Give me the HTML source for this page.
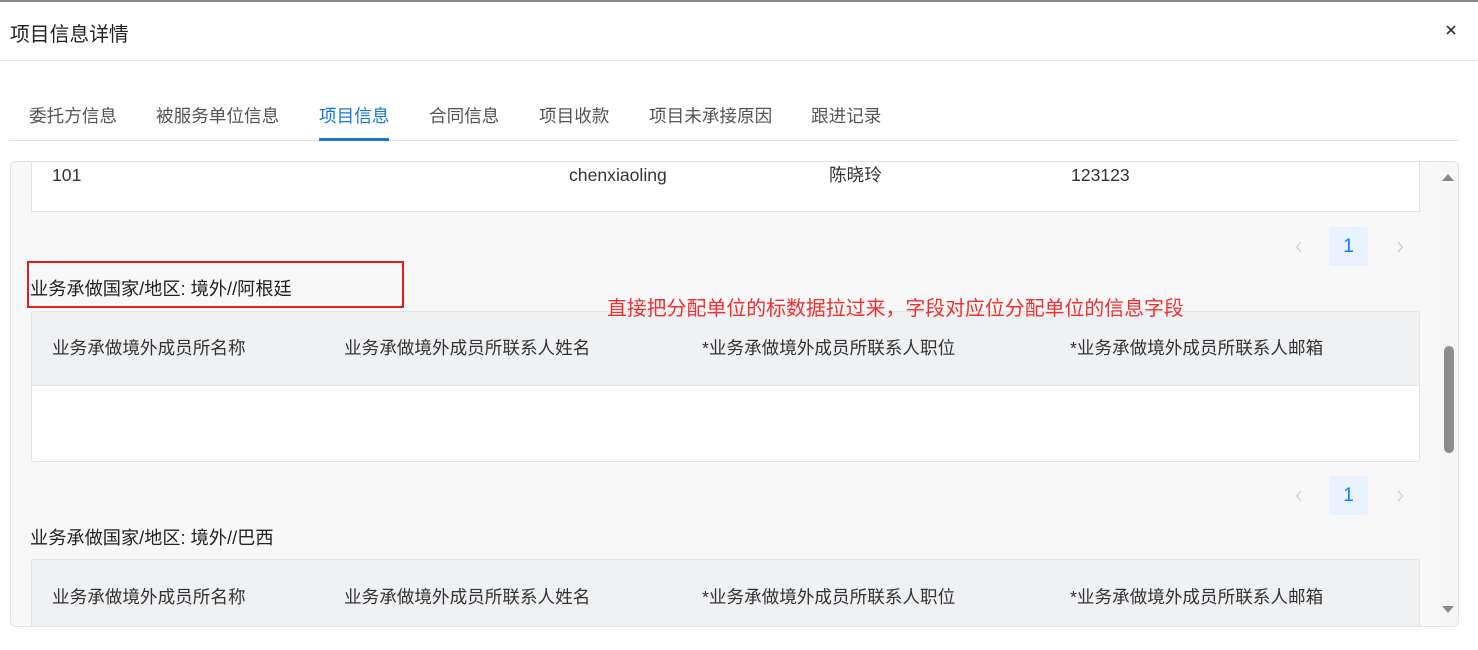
<!DOCTYPE html>
<html><head><meta charset="utf-8"><style>
*{margin:0;padding:0;box-sizing:border-box}
body{width:1478px;height:650px;background:#fff;font-family:"Liberation Sans","Noto Sans CJK SC",sans-serif;color:#222;position:relative;overflow:hidden}
.a{position:absolute;white-space:nowrap}
.tab{position:absolute;top:105px;font-size:17.6px;color:#555;line-height:22px}
.th{font-size:17.6px;color:#333;line-height:22px}
.lb{font-size:18.2px;color:#222;line-height:22px}
.pg{position:absolute;width:39px;height:39px;background:#e8f3ff;border-radius:3px;color:#1677ff;font-size:19px;text-align:center;line-height:39px}
.ch{position:absolute}
</style></head><body>
<div class="a" style="left:0;top:0;width:1478px;height:2px;background:#888"></div>
<div class="a" style="left:10px;top:18px;font-size:19.8px;color:#222">项目信息详情</div>
<svg class="a" style="left:1445px;top:24px" width="12" height="12" viewBox="0 0 12 12"><path d="M2 2L10 10M10 2L2 10" stroke="#333" stroke-width="1.6"/></svg>
<div class="a" style="left:0;top:60px;width:1478px;height:1px;background:#e6e6e6"></div>
<div class="tab" style="left:29px">委托方信息</div>
<div class="tab" style="left:156px">被服务单位信息</div>
<div class="tab" style="left:319px;color:#1677d2">项目信息</div>
<div class="tab" style="left:429px">合同信息</div>
<div class="tab" style="left:539px">项目收款</div>
<div class="tab" style="left:649px">项目未承接原因</div>
<div class="tab" style="left:811px">跟进记录</div>
<div class="a" style="left:9px;top:140px;width:1450px;height:1px;background:#e4e4e7"></div>
<div class="a" style="left:319px;top:138px;width:70px;height:3px;background:#1677d2"></div>

<div class="a" style="left:10px;top:161px;width:1449px;height:466px;background:#f8f8f9;border:1px solid #e4e4e7;border-radius:6px;overflow:hidden">
 <div class="a" style="left:20px;top:-1px;width:1389px;height:51px;background:#fff;border:1px solid #e4e4e7;border-top:none"></div>
 <div class="a th" style="left:41px;top:2px">101</div>
 <div class="a th" style="left:558px;top:2px">chenxiaoling</div>
 <div class="a th" style="left:818px;top:2px">陈晓玲</div>
 <div class="a th" style="left:1060px;top:2px">123123</div>
 <svg class="ch" style="left:1284px;top:79px" width="8" height="12"><path d="M6 1L1.5 6L6 11" stroke="#ccc" fill="none" stroke-width="1.2"/></svg>
 <div class="pg" style="left:1318px;top:65px">1</div>
 <svg class="ch" style="left:1385px;top:79px" width="8" height="12"><path d="M2 1L6.5 6L2 11" stroke="#ccc" fill="none" stroke-width="1.2"/></svg>
 <div class="a lb" style="left:19px;top:116px">业务承做国家/地区: 境外//阿根廷</div>
 <div class="a" style="left:20px;top:149px;width:1389px;height:151px;background:#fff;border:1px solid #e4e4e7;border-radius:3px"></div>
 <div class="a" style="left:21px;top:150px;width:1387px;height:74px;background:#f0f1f3;border-bottom:1px solid #e4e4e7"></div>
 <div class="a th" style="left:41px;top:175px">业务承做境外成员所名称</div>
 <div class="a th" style="left:333px;top:175px">业务承做境外成员所联系人姓名</div>
 <div class="a th" style="left:691px;top:175px">*业务承做境外成员所联系人职位</div>
 <div class="a th" style="left:1059px;top:175px">*业务承做境外成员所联系人邮箱</div>
 <svg class="ch" style="left:1284px;top:328px" width="8" height="12"><path d="M6 1L1.5 6L6 11" stroke="#ccc" fill="none" stroke-width="1.2"/></svg>
 <div class="pg" style="left:1318px;top:314px">1</div>
 <svg class="ch" style="left:1385px;top:328px" width="8" height="12"><path d="M2 1L6.5 6L2 11" stroke="#ccc" fill="none" stroke-width="1.2"/></svg>
 <div class="a lb" style="left:19px;top:365px">业务承做国家/地区: 境外//巴西</div>
 <div class="a" style="left:20px;top:397px;width:1389px;height:80px;background:#f0f1f3;border:1px solid #e4e4e7;border-radius:3px"></div>
 <div class="a th" style="left:41px;top:424px">业务承做境外成员所名称</div>
 <div class="a th" style="left:333px;top:424px">业务承做境外成员所联系人姓名</div>
 <div class="a th" style="left:691px;top:424px">*业务承做境外成员所联系人职位</div>
 <div class="a th" style="left:1059px;top:424px">*业务承做境外成员所联系人邮箱</div>
 <div class="a" style="left:1428px;top:0;width:20px;height:466px;background:#f6f6f6"></div>
 <div class="a" style="left:1433px;top:184px;width:10px;height:107px;background:#8c8c8c;border-radius:5px"></div>
 <div class="a" style="left:1431px;top:12px;width:0;height:0;border-left:6px solid transparent;border-right:6px solid transparent;border-bottom:7px solid #888"></div>
 <div class="a" style="left:1431px;top:444px;width:0;height:0;border-left:6px solid transparent;border-right:6px solid transparent;border-top:7px solid #888"></div>
</div>
<div class="a" style="left:27px;top:261px;width:377px;height:47px;border:2px solid #e02020"></div>
<div class="a" style="left:607px;top:292px;font-size:19.9px;color:#f03030">直接把分配单位的标数据拉过来，字段对应位分配单位的信息字段</div>
</body></html>
